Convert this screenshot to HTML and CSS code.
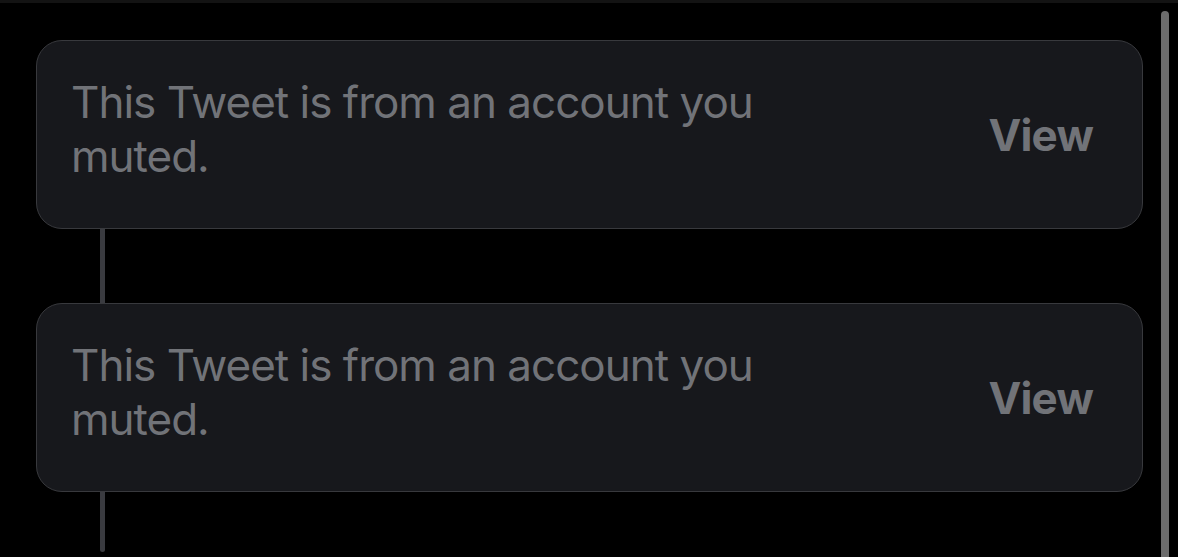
FILE: index.html
```html
<!DOCTYPE html>
<html>
<head>
    <title>Muted Tweets</title>
    <link rel="stylesheet" href="styles.css">
</head>
<body>
    <div class="topbar"></div>
    <div class="page">
        <div class="thread">
            <div class="muted-card">
                <p class="muted-text">This Tweet is from an account you muted.</p>
                <span class="view-btn">View</span>
            </div>
            <div class="connector"></div>
            <div class="muted-card">
                <p class="muted-text">This Tweet is from an account you muted.</p>
                <span class="view-btn">View</span>
            </div>
            <div class="connector last"></div>
        </div>
        <div class="scrollbar"></div>
    </div>
</body>
</html>
```

FILE: styles.css
```css
body {
    margin: 0;
    background-color: #000;
    font-family: Inter, "Noto Sans", sans-serif;
    height: 557px;
    overflow: hidden;
}

.topbar {
    height: 3px;
    background-color: #131313;
}

.page {
    display: flex;
    padding: 0 9px 0 36px;
}

.thread {
    flex: 1;
    padding-top: 37px;
}

.muted-card {
    display: flex;
    align-items: center;
    justify-content: space-between;
    height: 187px;
    padding: 0 49px 0 34px;
    border: 1px solid #38393d;
    border-radius: 26px;
    background-color: #17181c;
}

.muted-text {
    margin: 0 0 12px 0;
    width: 760px;
    font-size: 44px;
    line-height: 54px;
    color: #717378;
    letter-spacing: -1px;
}

.view-btn {
    font-size: 44px;
    font-weight: bold;
    color: #717378;
    letter-spacing: -0.8px;
}

.connector {
    width: 5px;
    height: 74px;
    margin-left: 64px;
    background-color: #3a3b40;
}

.connector.last {
    height: 60px;
    border-radius: 0 0 3px 3px;
}

.scrollbar {
    width: 8px;
    margin-left: 18px;
    margin-top: 8px;
    height: 560px;
    border-radius: 4px 4px 0 0;
    background-color: #6c6c6c;
}
```
